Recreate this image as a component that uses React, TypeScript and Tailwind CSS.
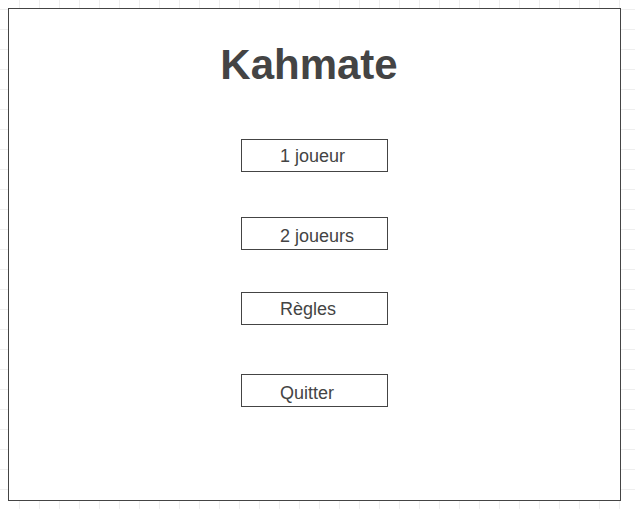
import React from "react";

export default function App() {
  return (
    <div
      className="w-full h-[509px] bg-white bg-[linear-gradient(to_right,#efefef_1px,transparent_1px),linear-gradient(to_bottom,#efefef_1px,transparent_1px)] bg-size-[20px_20px] bg-position-[19px_9px] p-[8px] font-['Liberation_Sans',Arial,sans-serif] text-[#444]"
    >
      <div className="w-[613px] h-[493px] border border-[#444] bg-white flex flex-col items-center">
        <h1 className="mt-[32px] pr-[11px] text-[42px] leading-[48px] font-bold">Kahmate</h1>
        <div className="flex flex-col items-center">
          <div className="mt-[50px] w-[147px] h-[33px] border border-[#444] pl-[38px] pt-[6px] text-[18px] leading-[20px]">1 joueur</div>
          <div className="mt-[45px] w-[147px] h-[33px] border border-[#444] pl-[38px] pt-[8px] text-[18px] leading-[20px]">2 joueurs</div>
          <div className="mt-[42px] w-[147px] h-[33px] border border-[#444] pl-[38px] pt-[6px] text-[18px] leading-[20px]">Règles</div>
          <div className="mt-[49px] w-[147px] h-[33px] border border-[#444] pl-[38px] pt-[8px] text-[18px] leading-[20px]">Quitter</div>
        </div>
      </div>
    </div>
  );
}
